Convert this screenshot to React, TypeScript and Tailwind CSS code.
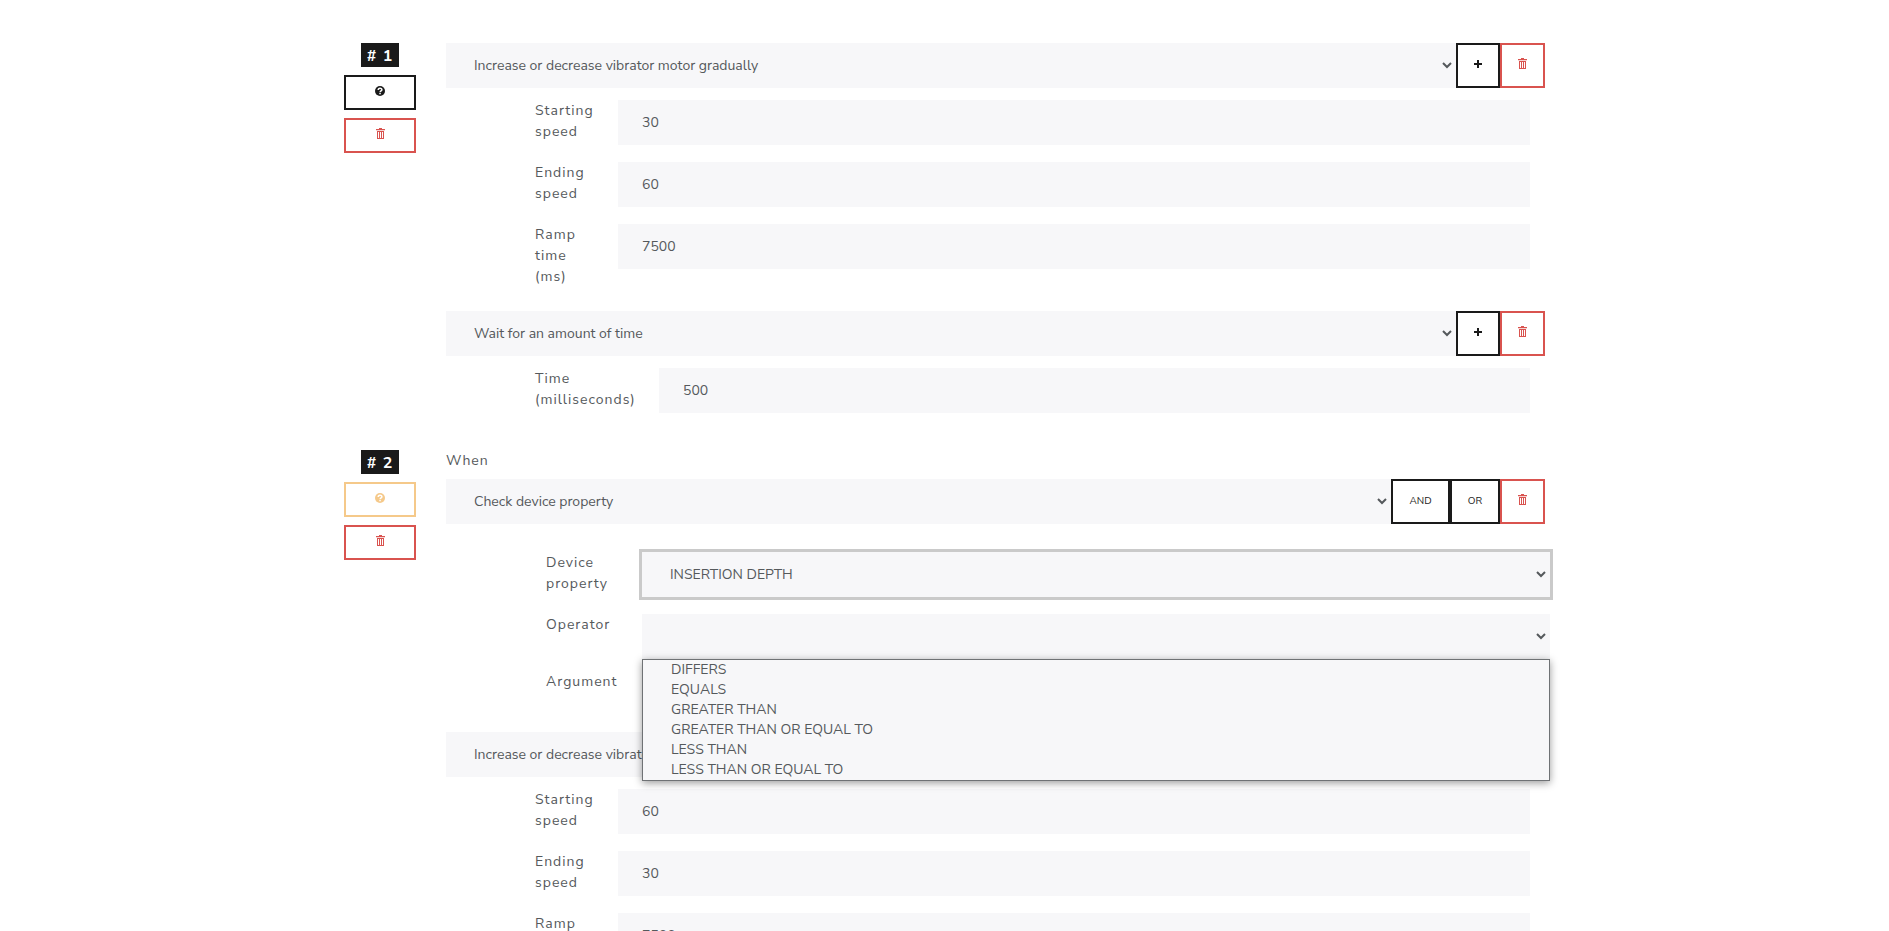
import { useState } from "react";

interface ParamProps {
  id: string;
  label: string;
  value: string;
  wide?: boolean;
}

const field =
  "h-[45px] min-w-0 flex-1 border-0 bg-[#f7f7f9] text-sm text-[#55595c] outline-none";

function TrashIcon() {
  return (
    <svg viewBox="0 0 9 11" className="h-[11px] w-[9px]" fill="currentColor" aria-hidden="true">
      <path
        d="M3 0h3v1h3v1.3H0V1h3zM1 3h7v8H1zM2 4v6h1V4zM4 4v6h1V4zM6 4v6h1V4z"
        fillRule="evenodd"
      />
    </svg>
  );
}

function HelpIcon() {
  return (
    <svg viewBox="0 0 10 10" className="size-[10px]" aria-hidden="true">
      <circle cx="5" cy="5" r="5" fill="currentColor" />
      <path
        d="M3.2 4C3.2 1.7 6.9 1.8 6.9 3.7 6.9 4.9 5.1 4.9 5.1 6.2"
        fill="none"
        stroke="#fff"
        strokeWidth="1.5"
      />
      <path d="M4.3 6.9h1.5v1.4H4.3z" fill="#fff" />
    </svg>
  );
}

function PlusIcon() {
  return (
    <svg viewBox="0 0 8 8" className="size-[8px]" aria-hidden="true">
      <path d="M4 0v8M0 4h8" stroke="currentColor" strokeWidth="2" />
    </svg>
  );
}

function Chevron() {
  return (
    <svg
      viewBox="0 0 10 7"
      className="pointer-events-none absolute top-[19px] right-1 h-[7px] w-[10px]"
      aria-hidden="true"
    >
      <path d="M1 1l4 4 4-4" fill="none" stroke="#55595c" strokeWidth="2" />
    </svg>
  );
}

function Select({
  id,
  label,
  options,
  focused,
}: {
  id: string;
  label?: string;
  options: string[];
  focused?: boolean;
}) {
  return (
    <div className="relative flex min-w-0 flex-1">
      <select
        id={id}
        aria-label={label}
        className={`${field} appearance-none rounded-none pr-6 pl-7 ${focused ? "ring-3 ring-[#cacaca]" : ""}`}
      >
        {options.map((o) => (
          <option key={o}>{o}</option>
        ))}
      </select>
      <Chevron />
    </div>
  );
}

function Param({ id, label, value, wide }: ParamProps) {
  const [current, setCurrent] = useState(value);
  return (
    <div className="flex items-start">
      <label
        htmlFor={id}
        className={`shrink-0 text-sm leading-[21px] tracking-[1px] ${wide ? "w-[124px]" : "w-[83px] pr-5"}`}
      >
        {label}
      </label>
      <input
        id={id}
        type="text"
        value={current}
        onChange={(e) => setCurrent(e.target.value)}
        className={`${field} px-6`}
      />
    </div>
  );
}

function DeleteButton() {
  return (
    <button
      aria-label="Remove"
      className="flex h-[45px] w-[45px] shrink-0 items-center justify-center border-2 border-[#d9534f] pb-[4px] text-[#d9534f]"
    >
      <TrashIcon />
    </button>
  );
}

function Action({ id, name, params }: { id: string; name: string; params: ParamProps[] }) {
  return (
    <div>
      <div className="flex">
        <Select id={id} label="Action" options={[name]} />
        <button
          aria-label="Add action"
          className="flex h-[45px] w-[44px] shrink-0 items-center justify-center border-2 border-[#1a1a1a] pb-[3px] text-[#1a1a1a]"
        >
          <PlusIcon />
        </button>
        <DeleteButton />
      </div>
      <div className="mt-3 flex flex-col gap-[17px] pr-[15px] pl-[89px]">
        {params.map((p) => (
          <Param key={p.id} {...p} />
        ))}
      </div>
    </div>
  );
}

function RuleControls({ index, warning }: { index: number; warning?: boolean }) {
  return (
    <div className="flex w-[72px] shrink-0 flex-col items-center gap-2">
      <h2 className="flex h-6 w-[38px] items-center justify-center bg-[#1a1a1a] pt-0.5 text-base font-bold tracking-[1px] whitespace-nowrap text-white">
        # {index}
      </h2>
      <button
        aria-label="Add condition"
        className={`flex h-[35px] w-full items-center justify-center border-2 pb-[3px] ${
          warning ? "border-[#f5c98a] text-[#f5c98a]" : "border-[#1a1a1a] text-[#1a1a1a]"
        }`}
      >
        <HelpIcon />
      </button>
      <button
        aria-label="Delete rule"
        className="flex h-[35px] w-full items-center justify-center border-2 border-[#d9534f] pb-[4px] pl-px text-[#d9534f]"
      >
        <TrashIcon />
      </button>
    </div>
  );
}

const operators = [
  "DIFFERS",
  "EQUALS",
  "GREATER THAN",
  "GREATER THAN OR EQUAL TO",
  "LESS THAN",
  "LESS THAN OR EQUAL TO",
];

const RAMP = "Increase or decrease vibrator motor gradually";

function Condition() {
  const label = "w-24 shrink-0 pr-4 text-sm leading-[21px] tracking-[1px]";
  return (
    <div>
      <p className="mb-2 text-sm leading-[21px] tracking-[1px]">When</p>
      <div className="flex">
        <Select id="condition" label="Condition" options={["Check device property"]} />
        <button className="h-[45px] w-[59px] shrink-0 border-2 border-[#1a1a1a] text-[10px] text-[#1a1a1a]">
          AND
        </button>
        <button className="h-[45px] w-[50px] shrink-0 border-2 border-[#1a1a1a] text-[10px] text-[#1a1a1a]">
          OR
        </button>
        <DeleteButton />
      </div>
      <div className="mt-7 -mr-[5px] flex flex-col pl-[100px]">
        <div className="flex items-start">
          <label htmlFor="property" className={label}>
            Device property
          </label>
          <Select id="property" options={["INSERTION DEPTH"]} focused />
        </div>
        <div className="mt-[17px] flex items-start">
          <label htmlFor="operator" className={label}>
            Operator
          </label>
          <div className="relative flex min-w-0 flex-1">
            <Select id="operator" options={[""]} />
            <ul
              role="listbox"
              aria-label="Operator"
              className="absolute inset-x-0 top-full z-10 border border-[#6f7275] bg-[#f7f7f9] text-sm leading-5 shadow-[0_2px_8px_rgba(0,0,0,0.4)]"
            >
              {operators.map((o) => (
                <li key={o} role="option" aria-selected={false} className="pl-7">
                  {o}
                </li>
              ))}
            </ul>
          </div>
        </div>
        <div className="mt-3 flex items-start">
          <label htmlFor="argument" className={label}>
            Argument
          </label>
          <input id="argument" type="text" className={`${field} px-6`} />
        </div>
      </div>
    </div>
  );
}

export default function App() {
  return (
    <div className="h-screen overflow-hidden bg-white font-['Nunito_Sans',Nunito,Lato,sans-serif] text-[#55595c]">
      <main className="mx-auto flex max-w-[1201px] flex-col gap-[37px] pt-[43px]">
        <section className="flex gap-[30px]">
          <RuleControls index={1} />
          <div className="flex min-w-0 flex-1 flex-col gap-6">
            <Action
              id="action-1"
              name={RAMP}
              params={[
                { id: "start-1", label: "Starting speed", value: "30" },
                { id: "end-1", label: "Ending speed", value: "60" },
                { id: "ramp-1", label: "Ramp time (ms)", value: "7500" },
              ]}
            />
            <Action
              id="action-2"
              name="Wait for an amount of time"
              params={[{ id: "wait-1", label: "Time (milliseconds)", value: "500", wide: true }]}
            />
          </div>
        </section>
        <section className="flex gap-[30px]">
          <RuleControls index={2} warning />
          <div className="flex min-w-0 flex-1 flex-col gap-4">
            <Condition />
            <Action
              id="action-3"
              name={RAMP}
              params={[
                { id: "start-2", label: "Starting speed", value: "60" },
                { id: "end-2", label: "Ending speed", value: "30" },
                { id: "ramp-2", label: "Ramp time (ms)", value: "7500" },
              ]}
            />
          </div>
        </section>
      </main>
    </div>
  );
}
